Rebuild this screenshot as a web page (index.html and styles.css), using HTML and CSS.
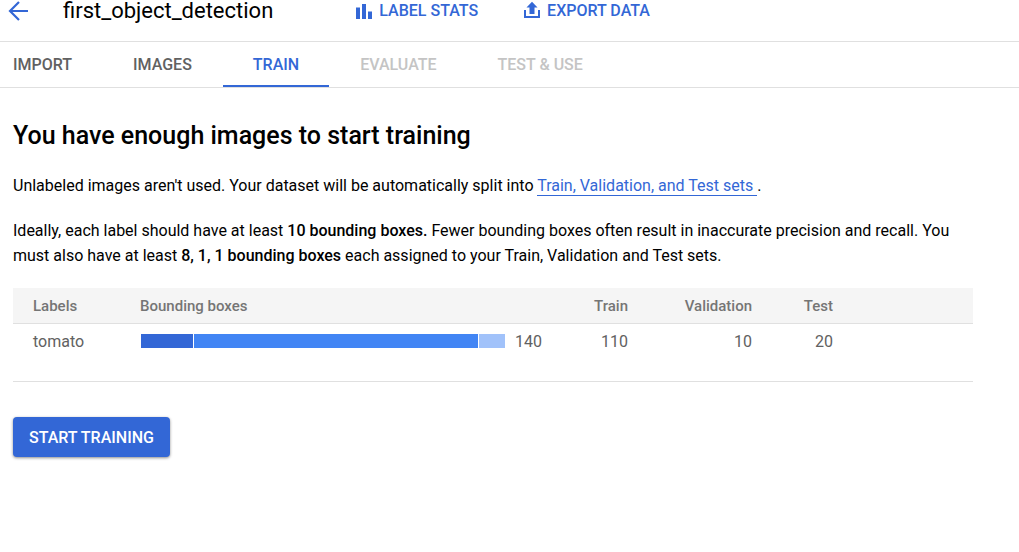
FILE: index.html
```html
<!DOCTYPE html>
<html lang="en">
<head>
<meta charset="utf-8">
<meta name="viewport" content="width=device-width, initial-scale=1">
<title>first_object_detection</title>
<link rel="stylesheet" href="styles.css">
</head>
<body>
<header class="topbar">
  <button class="back" type="button" aria-label="Back">
    <svg width="20" height="20" viewBox="0 0 20 20" aria-hidden="true"><path d="M20 10H2M11 1L2 10L11 19" fill="none" stroke="currentColor" stroke-width="2.2"/></svg>
  </button>
  <h1 class="title">first_object_detection</h1>
  <div class="actions">
    <button class="action" type="button">
      <svg width="18" height="18" viewBox="0 1 18 18" aria-hidden="true"><path d="M1 6.5h4V18H1zM7 3h4v15H7zM13 10.5h4V18h-4z" fill="currentColor"/></svg>
      <span>LABEL STATS</span>
    </button>
    <button class="action" type="button">
      <svg width="18" height="18" viewBox="0 1 18 18" aria-hidden="true"><path d="M9 .8l5.5 5.7H11.500V13H6.500V6.500H3.500zM1 9h2v6h12V9h2v8H1z" fill="currentColor"/></svg>
      <span>EXPORT DATA</span>
    </button>
  </div>
</header>
<nav class="tabs">
  <button class="tab" type="button">IMPORT</button>
  <button class="tab" type="button">IMAGES</button>
  <button class="tab tab-active" type="button" aria-current="page">TRAIN</button>
  <button class="tab" type="button" disabled>EVALUATE</button>
  <button class="tab" type="button" disabled>TEST &amp; USE</button>
</nav>
<main class="content">
  <h2 class="heading">You have enough images to start training</h2>
  <p class="text">Unlabeled images aren't used. Your dataset will be automatically split into <a class="link" href="#">Train, Validation, and Test sets&nbsp;</a>.</p>
  <p class="text">Ideally, each label should have at least <b>10 bounding boxes.</b> Fewer bounding boxes often result in inaccurate precision and recall. You must also have at least <b>8, 1, 1 bounding boxes</b> each assigned to your Train, Validation and Test sets.</p>
  <table class="stats">
    <colgroup><col class="col-label"><col class="col-boxes"><col class="col-train"><col class="col-validation"><col class="col-test"><col></colgroup>
    <thead>
      <tr><th class="label">Labels</th><th>Bounding boxes</th><th class="num">Train</th><th class="num">Validation</th><th class="num">Test</th><th></th></tr>
    </thead>
    <tbody>
      <tr>
        <td class="label">tomato</td>
        <td><div class="boxes"><div class="bar"><span class="seg seg-test"></span><span class="seg seg-train"></span><span class="seg seg-validation"></span></div><span>140</span></div></td>
        <td class="num">110</td><td class="num">10</td><td class="num">20</td><td></td>
      </tr>
    </tbody>
  </table>
  <button class="start" type="button">START TRAINING</button>
</main>
</body>
</html>
```
FILE: styles.css
```css
* { box-sizing: border-box; }
body { margin: 0; background: #fff; color: #000; font: 16px/25px Roboto, sans-serif; }
button { margin: 0; padding: 0; border: 0; background: none; font: inherit; cursor: pointer; }
svg { display: block; flex: none; overflow: visible; }
b { font-weight: 500; }

.topbar { display: flex; align-items: center; height: 42px; padding: 0 8px 19px; border-bottom: 1px solid #e0e0e0; }
.back { color: #3367d6; }
.title { margin: 0 0 0 35px; font-size: 22px; line-height: 22px; font-weight: 400; }
.actions { display: flex; gap: 45px; margin-left: 82px; }
.action { display: flex; align-items: center; gap: 6px; color: #3367d6; font-weight: 500; line-height: 22px; }

.tabs { display: flex; gap: 1px; height: 46px; padding-right: 13px; border-bottom: 1px solid #e0e0e0; }
.tab { padding: 2px 30px 0; border-bottom: 2px solid transparent; color: #616161; font-weight: 500; line-height: 20px; }
.tab:first-child { padding-left: 13px; }
.tab:disabled { color: #c4c4c4; cursor: default; }
.tab-active { border-color: #3367d6; color: #3367d6; }

.content { padding: 32px 46px 32px 13px; }
.heading { margin: 0 0 22px; font-size: 25px; line-height: 31px; font-weight: 500; }
.text { margin: 0 0 20px; }
.link { border-bottom: 1px solid #3367d6; color: #3367d6; text-decoration: none; }

.stats { width: 100%; table-layout: fixed; border-collapse: collapse; border-bottom: 1px solid #e0e0e0; color: #616161; }
.stats th { height: 35px; padding: 2px 0 0; border-bottom: 1px solid #e0e0e0; background: #f5f5f5; color: #757575; font-size: 15px; font-weight: 500; text-align: left; }
.stats td { height: 58px; padding: 5px 0 0; vertical-align: top; }
.stats .label { padding-left: 20px; }
.stats .num { text-align: right; }
.col-label { width: 127px; }
.col-boxes { width: 404px; }
.col-train { width: 84px; }
.col-validation { width: 124px; }
.col-test { width: 81px; }
.boxes { display: flex; align-items: center; gap: 10px; }
.bar { display: flex; gap: 1px; width: 364px; height: 14px; margin-left: 1px; }
.seg-test { flex: 20; background: #3367d6; }
.seg-train { flex: 110; background: #4285f4; }
.seg-validation { flex: 10; background: #a1c2fa; }

.start { height: 40px; margin-top: 35px; padding: 2px 16px 0; border-radius: 4px; background: #3367d6; color: #fff; font-weight: 500; box-shadow: 0 1px 3px rgba(0, 0, 0, 0.45); }
```
